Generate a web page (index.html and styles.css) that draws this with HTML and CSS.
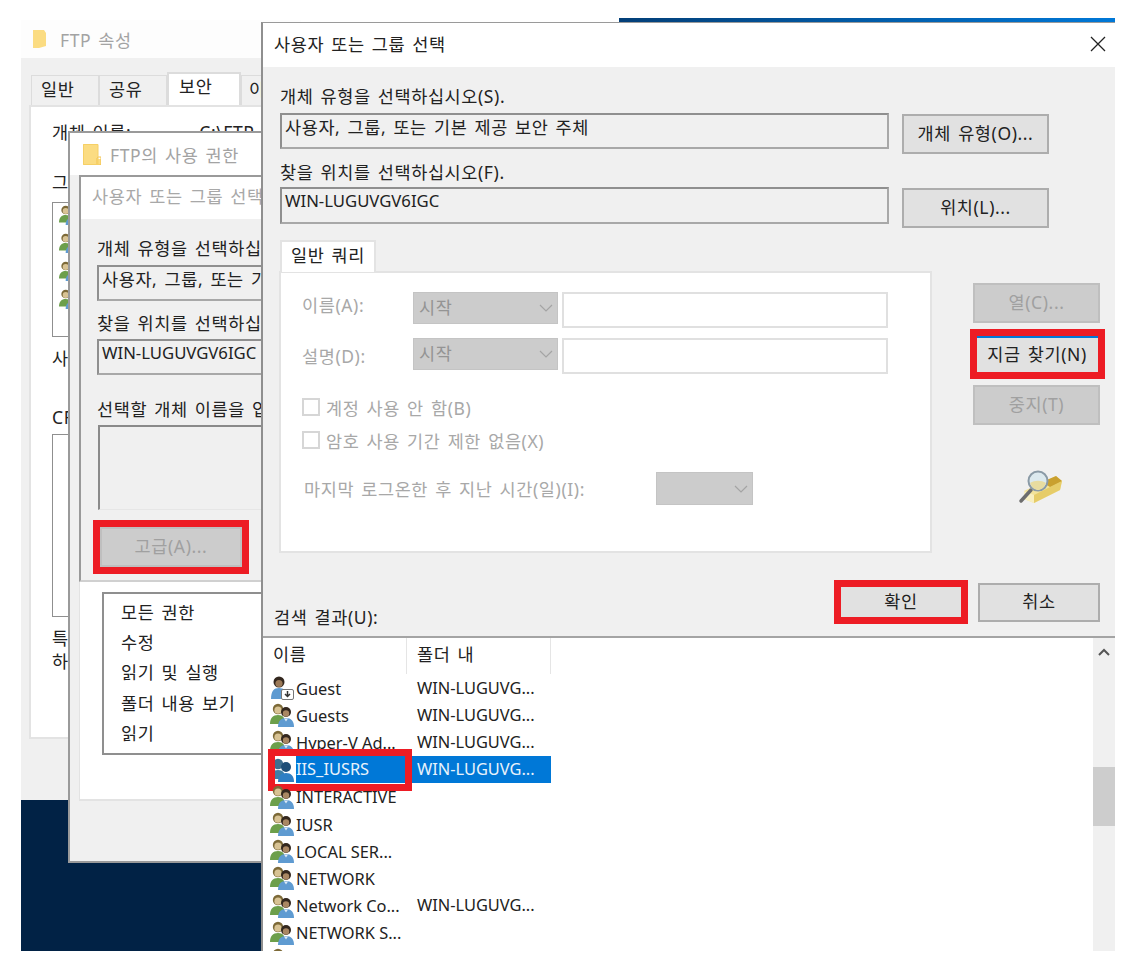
FILE: index.html
```html
<!DOCTYPE html>
<html lang="ko">
<head>
    <meta charset="UTF-8">
    <meta name="viewport" content="width=device-width, initial-scale=1.0">
    <title>사용자 또는 그룹 선택</title>
    <link rel="stylesheet" href="styles.css">
</head>
<body>
    <svg class="icon-defs" width="0" height="0">
        <symbol id="ico-group" viewBox="0 0 24 24">
            <circle cx="8" cy="6" r="5.200" fill="#7d6a38"/>
            <circle cx="8" cy="7.200" r="3.600" fill="#d8c394"/>
            <path d="M0 21c0-6 3-9 8-9 3 0 5 1 6 3v6z" fill="#6c9f4b"/>
            <circle cx="16" cy="9" r="5" fill="#33271e"/>
            <circle cx="16" cy="10.500" r="3.200" fill="#a98763"/>
            <path d="M8 24c0-6 3-9 8-9s8 3 8 9z" fill="#5f9bd1"/>
            <path d="M14 15.500l2 3 2-3z" fill="#dfeaf5"/>
        </symbol>
        <symbol id="ico-guest" viewBox="0 0 24 24">
            <circle cx="9" cy="6" r="5.500" fill="#33271e"/>
            <circle cx="9" cy="7.500" r="3.600" fill="#9c7a58"/>
            <path d="M1 23c0-8 3-11 8-11s8 3 8 11z" fill="#5f9bd1"/>
            <rect x="11.500" y="13.500" width="12" height="10" rx="1.500" fill="#fff" stroke="#777"/>
            <path d="M17.500 15v5M15 18l2.500 2.500L20 18" fill="none" stroke="#333" stroke-width="1.500"/>
        </symbol>
        <symbol id="ico-group-sel" viewBox="0 0 24 24">
            <circle cx="8" cy="6" r="5.200" fill="#3f6f8f"/>
            <path d="M0 21c0-6 3-9 8-9 3 0 5 1 6 3v6z" fill="#3d7fa8"/>
            <circle cx="16" cy="9" r="5" fill="#1f4f78"/>
            <path d="M8 24c0-6 3-9 8-9s8 3 8 9z" fill="#2f7fc4"/>
        </symbol>
        <symbol id="ico-folder" viewBox="0 0 18 22">
            <path d="M0 1h15v15h3v6H0z" fill="#fbdc82"/>
            <path d="M15 14h3v8h-4v-7z" fill="none" stroke="#f2c34e"/>
            <path d="M.5 1.500h14.500v20H.5z" fill="none" stroke="#f6d066"/>
        </symbol>
        <symbol id="ico-chevron" viewBox="0 0 14 8">
            <path d="M1 1l6 6 6-6" fill="none" stroke="#a4a4a4" stroke-width="1.200"/>
        </symbol>
    </svg>

    <div class="wallpaper"></div>
    <div class="title-strip"></div>

    <section class="win win-props">
        <div class="props-title">
            <svg class="props-folder" viewBox="0 0 13 18"><path d="M0 0h11l2 3v13l-7 2H0z" fill="#fbdc82"/></svg>
            <span>FTP 속성</span>
        </div>
        <div class="tabs">
            <span class="tab">일반</span>
            <span class="tab">공유</span>
            <span class="tab tab-on">보안</span>
            <span class="tab tab-last">이</span>
        </div>
        <div class="props-panel">
            <p class="props-line props-name">개체 이름:<span class="props-path">C:\FTP</span></p>
            <p class="props-line props-group">그</p>
            <div class="props-box props-users">
                <svg class="user-ico"><use href="#ico-group"/></svg>
                <svg class="user-ico"><use href="#ico-group"/></svg>
                <svg class="user-ico"><use href="#ico-group"/></svg>
                <svg class="user-ico"><use href="#ico-group"/></svg>
            </div>
            <p class="props-line props-edit">사</p>
            <p class="props-line props-cr">CR</p>
            <div class="props-box props-perms"></div>
            <p class="props-line props-note">특</p>
            <p class="props-line props-note2">하</p>
        </div>
    </section>

    <section class="win win-perm">
        <div class="perm-title">
            <svg class="perm-folder"><use href="#ico-folder"/></svg>
            <span>FTP의 사용 권한</span>
        </div>
        <div class="perm-panel">
            <div class="back-dialog">
                <div class="back-title">사용자 또는 그룹 선택</div>
                <div class="back-body">
                    <label class="back-label back-label-first">개체 유형을 선택하십</label>
                    <div class="field">사용자, 그룹, 또는 기</div>
                    <label class="back-label">찾을 위치를 선택하십</label>
                    <div class="field field-latin">WIN-LUGUVGV6IGC</div>
                    <label class="back-label back-label-wide">선택할 개체 이름을 입</label>
                    <div class="back-area"></div>
                    <div class="mark mark-adv"><button class="btn btn-off btn-adv">고급(A)...</button></div>
                </div>
            </div>
            <ul class="perm-list">
                <li>모든 권한</li>
                <li>수정</li>
                <li>읽기 및 실행</li>
                <li>폴더 내용 보기</li>
                <li>읽기</li>
            </ul>
        </div>
    </section>

    <section class="win win-main">
        <div class="main-title">
            <span>사용자 또는 그룹 선택</span>
            <svg class="close-x" viewBox="0 0 16 16"><path d="M1 1l14 14M15 1L1 15" stroke="#222" stroke-width="1.300"/></svg>
        </div>
        <div class="main-body">
            <div class="pick-grid">
                <label class="pick-label">개체 유형을 선택하십시오(S).</label>
                <span></span>
                <div class="field">사용자, 그룹, 또는 기본 제공 보안 주체</div>
                <button class="btn btn-pick">개체 유형(O)...</button>
                <label class="pick-label pick-label-2">찾을 위치를 선택하십시오(F).</label>
                <span></span>
                <div class="field field-latin field-tall">WIN-LUGUVGV6IGC</div>
                <button class="btn btn-pick">위치(L)...</button>
            </div>

            <div class="query-wrap">
                <div class="query">
                    <div class="query-tab">일반 쿼리</div>
                    <div class="query-panel">
                        <div class="query-grid">
                            <span class="off-text">이름(A):</span>
                            <div class="combo"><span>시작</span><svg class="chev"><use href="#ico-chevron"/></svg></div>
                            <div class="blank"></div>
                            <span class="off-text off-low">설명(D):</span>
                            <div class="combo"><span>시작</span><svg class="chev"><use href="#ico-chevron"/></svg></div>
                            <div class="blank"></div>
                        </div>
                        <div class="checks">
                            <div class="check"><i class="box"></i><span class="off-text">계정 사용 안 함(B)</span></div>
                            <div class="check"><i class="box"></i><span class="off-text">암호 사용 기간 제한 없음(X)</span></div>
                        </div>
                        <div class="days">
                            <span class="off-text days-label">마지막 로그온한 후 지난 시간(일)(I):</span>
                            <div class="combo combo-days"><svg class="chev"><use href="#ico-chevron"/></svg></div>
                        </div>
                    </div>
                </div>
                <div class="side">
                    <button class="btn btn-off btn-side">열(C)...</button>
                    <div class="mark mark-find"><button class="btn btn-find">지금 찾기(N)</button></div>
                    <button class="btn btn-off btn-side">중지(T)</button>
                    <svg class="search-ico" viewBox="0 0 46 34">
                        <path d="M6 21l32-15 6 5-2 9-26 13-10-4z" fill="#f3e39a"/>
                        <path d="M16 33l26-13 2-9-28 14z" fill="#e6cc68"/>
                        <path d="M6 21l10 4v8l-10-4z" fill="#f8efc0"/>
                        <path d="M24 12l14-6 6 5-12 6z" fill="#c9a02f"/>
                        <path d="M3 31l10-11" stroke="#6d6d6d" stroke-width="3.500" stroke-linecap="round"/>
                        <circle cx="20" cy="11" r="9.500" fill="#dce9ee" stroke="#8a9aa6" stroke-width="2"/>
                        <path d="M12 13c5-3 11-3 16 0-2 5-5 7-8 7s-6-2-8-7z" fill="#e8dca0"/>
                    </svg>
                </div>
            </div>

            <div class="footer">
                <label class="result-label">검색 결과(U):</label>
                <div class="mark mark-ok"><button class="btn btn-ok">확인</button></div>
                <button class="btn btn-cancel">취소</button>
            </div>
        </div>

        <div class="results">
            <div class="res-head">
                <span class="head-cell">이름</span>
                <span class="head-cell">폴더 내</span>
            </div>
            <div class="res-row"><span class="res-name"><svg class="res-ico"><use href="#ico-guest"/></svg>Guest</span><span class="res-dir">WIN-LUGUVG...</span></div>
            <div class="res-row"><span class="res-name"><svg class="res-ico"><use href="#ico-group"/></svg>Guests</span><span class="res-dir">WIN-LUGUVG...</span></div>
            <div class="res-row"><span class="res-name"><svg class="res-ico"><use href="#ico-group"/></svg>Hyper-V Ad...</span><span class="res-dir">WIN-LUGUVG...</span></div>
            <div class="res-row res-sel">
                <span class="res-name"><svg class="res-ico"><use href="#ico-group-sel"/></svg><b>IIS_IUSRS</b></span><span class="res-dir">WIN-LUGUVG...</span>
                <div class="mark-row"></div>
            </div>
            <div class="res-row"><span class="res-name"><svg class="res-ico"><use href="#ico-group"/></svg>INTERACTIVE</span></div>
            <div class="res-row"><span class="res-name"><svg class="res-ico"><use href="#ico-group"/></svg>IUSR</span></div>
            <div class="res-row"><span class="res-name"><svg class="res-ico"><use href="#ico-group"/></svg>LOCAL SER...</span></div>
            <div class="res-row"><span class="res-name"><svg class="res-ico"><use href="#ico-group"/></svg>NETWORK</span></div>
            <div class="res-row"><span class="res-name"><svg class="res-ico"><use href="#ico-group"/></svg>Network Co...</span><span class="res-dir">WIN-LUGUVG...</span></div>
            <div class="res-row"><span class="res-name"><svg class="res-ico"><use href="#ico-group"/></svg>NETWORK S...</span></div>
            <div class="res-row"><span class="res-name"><svg class="res-ico"><use href="#ico-group"/></svg></span></div>
            <div class="scroll">
                <svg class="scroll-up" viewBox="0 0 12 8"><path d="M1 7l5-5 5 5" fill="none" stroke="#555" stroke-width="2"/></svg>
                <div class="scroll-thumb"></div>
            </div>
        </div>
    </section>
</body>
</html>
```

FILE: styles.css
```css
* {
    box-sizing: border-box;
}
body {
    margin: 0;
    width: 1127px;
    height: 975px;
    position: relative;
    overflow: hidden;
    background-color: white;
    color: #222;
    font-family: "Noto Sans", "Noto Sans CJK KR", sans-serif;
    font-size: 17.5px;
    letter-spacing: 0.6px;
    word-spacing: 2px;
}
p, ul {
    margin: 0;
    padding: 0;
}
.icon-defs {
    position: absolute;
}

/* desktop */
.wallpaper {
    position: absolute;
    left: 21px;
    top: 790px;
    width: 245px;
    height: 161px;
    background-color: #012245;
}
.title-strip {
    position: absolute;
    left: 619px;
    top: 18px;
    width: 496px;
    height: 6px;
    background: linear-gradient(to right, #033f78, #0078d7);
}
.win {
    position: absolute;
    white-space: nowrap;
}

/* FTP 속성 */
.win-props {
    left: 21px;
    top: 20px;
    width: 280px;
    height: 780px;
    background-color: #f0f0f0;
}
.props-title {
    height: 38px;
    background-color: #fdfdfd;
    display: flex;
    align-items: center;
    padding-left: 12px;
    gap: 14px;
    color: #a3a3a3;
}
.props-folder {
    width: 13px;
    height: 18px;
}
.tabs {
    display: flex;
    align-items: flex-end;
    height: 47px;
    padding-left: 10px;
}
.tab {
    flex: none;
    width: 68px;
    height: 30px;
    background-color: #f0f0f0;
    border: 1px solid #dcdcdc;
    border-bottom: none;
    padding-left: 9px;
    line-height: 27px;
}
.tab-on {
    width: 74px;
    height: 33px;
    background-color: white;
    border-width: 2px;
    padding-left: 10px;
    line-height: 25px;
}
.tab-last {
    width: 100px;
    padding-left: 7px;
}
.props-panel {
    margin-left: 8px;
    height: 634px;
    background-color: white;
    border: 2px solid #e3e3e3;
    padding-left: 21px;
}
.props-line {
    height: 22px;
    line-height: 22px;
}
.props-name {
    margin-top: 14px;
}
.props-path {
    margin-left: 68px;
}
.props-group {
    margin-top: 28px;
}
.props-box {
    width: 260px;
    border: 1px solid #8f8f8f;
}
.props-users {
    margin-top: 9px;
    height: 135px;
    padding: 1px 0 0 6px;
    display: flex;
    flex-direction: column;
    gap: 6px;
}
.user-ico {
    width: 20px;
    height: 22px;
}
.props-edit {
    margin-top: 10px;
}
.props-cr {
    margin-top: 37px;
}
.props-perms {
    margin-top: 6px;
    height: 183px;
}
.props-note {
    margin-top: 10px;
}
.props-note2 {
    margin-top: 1px;
}

/* FTP의 사용 권한 */
.win-perm {
    left: 68px;
    top: 131px;
    width: 240px;
    height: 732px;
    background-color: #f0f0f0;
    border: 2px solid #9a9a9a;
}
.perm-title {
    height: 42px;
    background-color: white;
    display: flex;
    align-items: center;
    padding-left: 13px;
    gap: 9px;
    color: #a3a3a3;
}
.perm-folder {
    width: 18px;
    height: 22px;
}
.perm-panel {
    margin-left: 9px;
    height: 626px;
    background-color: white;
    border-left: 1px solid #e3e3e3;
    border-bottom: 2px solid #e3e3e3;
}
.back-dialog {
    height: 407px;
    background-color: #f0f0f0;
    border-top: 2px solid #9a9a9a;
    border-left: 2px solid #9a9a9a;
    border-bottom: 2px solid #d0d0d0;
    margin-left: -1px;
}
.back-title {
    height: 42px;
    line-height: 38px;
    background-color: white;
    padding-left: 11px;
    color: #a8a8a8;
}
.back-body {
    padding-left: 16px;
}
.back-label {
    display: block;
    height: 26px;
    line-height: 20px;
    margin-top: 12px;
}
.back-label-first {
    margin-top: 19px;
    height: 27px;
}
.back-label-wide {
    margin-top: 24px;
}
.field {
    height: 36px;
    width: 609px;
    background-color: #f0f0f0;
    border: 2px solid #8f8f8f;
    border-right-color: #a8a8a8;
    border-bottom-color: #a8a8a8;
    padding-left: 3px;
    line-height: 24px;
}
.field-latin {
    font-size: 16.7px;
    letter-spacing: 0;
    word-spacing: 0;
}
.back-area {
    width: 170px;
    height: 85px;
    margin-left: 1px;
    background-color: #f0f0f0;
    border-top: 2px solid #8a8a8a;
    border-left: 2px solid #8a8a8a;
    border-bottom: 1px solid #e6e6e6;
}
.mark {
    border: 7px solid #ed1c24;
    display: inline-block;
    flex: none;
}
.mark-adv {
    margin: 10px 0 0 -4px;
    display: block;
    width: 156px;
    height: 54px;
}
.btn {
    display: block;
    font: inherit;
    letter-spacing: inherit;
    word-spacing: inherit;
    color: #222;
    background-color: #e1e1e1;
    border: 2px solid #adadad;
    padding: 0 0 4px;
    white-space: nowrap;
}
.btn-off {
    background-color: #cccccc;
    border-color: #bfbfbf;
    color: #a0a0a0;
}
.btn-adv {
    width: 142px;
    height: 40px;
}
.perm-list {
    list-style: none;
    width: 240px;
    height: 163px;
    margin: 10px 0 0 22px;
    border: 2px solid #8f8f8f;
    border-right: none;
    padding: 3px 0 0 17px;
}
.perm-list li {
    height: 30.2px;
    line-height: 30px;
}

/* 사용자 또는 그룹 선택 */
.win-main {
    left: 261px;
    top: 22px;
    width: 854px;
    height: 929px;
    overflow: hidden;
    background-color: #f0f0f0;
    border-top: 1px solid #9a9a9a;
    border-left: 2px solid #8f8f8f;
    display: flex;
    flex-direction: column;
}
.main-title {
    height: 44px;
    flex: none;
    background-color: white;
    display: flex;
    align-items: center;
    justify-content: space-between;
    padding: 0 9px 3px 11px;
}
.close-x {
    width: 16px;
    height: 16px;
}
.main-body {
    flex: none;
    height: 571px;
    padding: 20px 15px 0 17px;
    border-bottom: 2px solid #a4a4a4;
}
.pick-grid {
    display: grid;
    grid-template-columns: 609px 147px;
    column-gap: 13px;
    align-items: start;
}
.pick-label {
    height: 26px;
    line-height: 18px;
}
.pick-label-2 {
    margin-top: 7px;
    padding-top: 2px;
}
.field-tall {
    height: 37px;
}
.btn-pick {
    width: 147px;
    height: 40px;
    margin-top: 1px;
}
.query-wrap {
    display: flex;
    margin-top: 12px;
    margin-left: -1px;
    gap: 41px;
}
.query {
    width: 653px;
}
.query-tab {
    width: 96px;
    height: 32px;
    margin-left: 1px;
    margin-bottom: -1px;
    position: relative;
    background-color: white;
    border: 2px solid #e3e3e3;
    border-bottom: none;
    text-align: center;
    line-height: 26px;
}
.query-panel {
    height: 282px;
    background-color: white;
    border: 2px solid #e3e3e3;
    padding: 19px 0 0 21px;
}
.off-text {
    color: #a8a8a8;
}
.off-low {
    padding-top: 5px;
}
.query-grid {
    display: grid;
    grid-template-columns: 111px 145px 326px;
    grid-auto-rows: 36px;
    row-gap: 10px;
    column-gap: 0;
}
.combo {
    height: 32px;
    width: 145px;
    background-color: #cccccc;
    border: 1px solid #c4c4c4;
    color: #949494;
    display: flex;
    align-items: center;
    justify-content: space-between;
    padding: 0 4px 4px 5px;
}
.chev {
    width: 14px;
    height: 8px;
    margin-top: 4px;
}
.blank {
    margin-left: 4px;
    width: 326px;
    border: 2px solid #e0e0e0;
}
.checks {
    margin-top: 24px;
    display: flex;
    flex-direction: column;
    gap: 15px;
}
.check {
    display: flex;
    align-items: center;
    gap: 6px;
    height: 18px;
}
.box {
    width: 18px;
    height: 18px;
    border: 2px solid #d6d6d6;
}
.days {
    display: flex;
    align-items: center;
    margin-top: 23px;
    padding-left: 2px;
}
.days-label {
    width: 352px;
}
.combo-days {
    width: 97px;
    height: 33px;
    justify-content: flex-end;
    padding: 0 4px 4px 0;
}
.side {
    width: 127px;
    margin-top: 43px;
    display: flex;
    flex-direction: column;
    align-items: center;
    gap: 6px;
}
.btn-side {
    width: 127px;
    height: 40px;
}
.mark-find {
    width: 135px;
    height: 50px;
    margin: 0 -4px 0 -3px;
}
.btn-find {
    width: 121px;
    height: 36px;
    border-width: 0;
    border-top: 2px solid #0078d7;
}
.search-ico {
    width: 46px;
    height: 34px;
    margin: 39px 0 0 8px;
}
.footer {
    display: flex;
    align-items: flex-start;
    margin: 27px 0 0 -6px;
    height: 58px;
}
.result-label {
    margin-right: auto;
    align-self: flex-end;
    height: 24px;
    margin-bottom: 7px;
    line-height: 20px;
}
.mark-ok {
    width: 134px;
    height: 44px;
}
.btn-ok {
    width: 120px;
    height: 30px;
    border-width: 0;
}
.btn-cancel {
    width: 122px;
    height: 39px;
    margin: 3px 0 0 10px;
}
.results {
    flex: 1;
    background-color: white;
    position: relative;
    overflow: hidden;
    display: flex;
    flex-direction: column;
    font-size: 16.4px;
    letter-spacing: 0;
    word-spacing: 0;
}
.res-head {
    height: 36.5px;
    flex: none;
    display: flex;
    font-size: 17.5px;
    letter-spacing: 0.6px;
    word-spacing: 2px;
}
.head-cell {
    width: 144px;
    height: 36px;
    padding-left: 10px;
    line-height: 33px;
    border-right: 1px solid #e5e5e5;
}
.res-row {
    height: 27.2px;
    flex: none;
    display: grid;
    grid-template-columns: 144px 144px;
    line-height: 25px;
    position: relative;
}
.res-name {
    display: flex;
    align-items: center;
    padding-left: 7px;
    gap: 2px;
}
.res-ico {
    width: 24px;
    height: 24px;
    flex: none;
}
.res-dir {
    padding-left: 10px;
}
.res-sel {
    color: #e8f2fb;
}
.res-sel .res-name b {
    font-weight: normal;
    flex: 1;
    align-self: stretch;
    background-color: #0078d7;
}
.res-sel .res-dir {
    background-color: #0078d7;
}
.mark-row {
    position: absolute;
    left: 5px;
    top: -7px;
    width: 144px;
    height: 42px;
    border: 7px solid #ed1c24;
}
.scroll {
    position: absolute;
    right: 0;
    top: 0;
    bottom: 0;
    width: 22px;
    background-color: #f0f0f0;
}
.scroll-up {
    position: absolute;
    left: 5px;
    top: 10px;
    width: 12px;
    height: 8px;
}
.scroll-thumb {
    position: absolute;
    left: 0;
    top: 129px;
    width: 22px;
    height: 59px;
    background-color: #cdcdcd;
}
```
